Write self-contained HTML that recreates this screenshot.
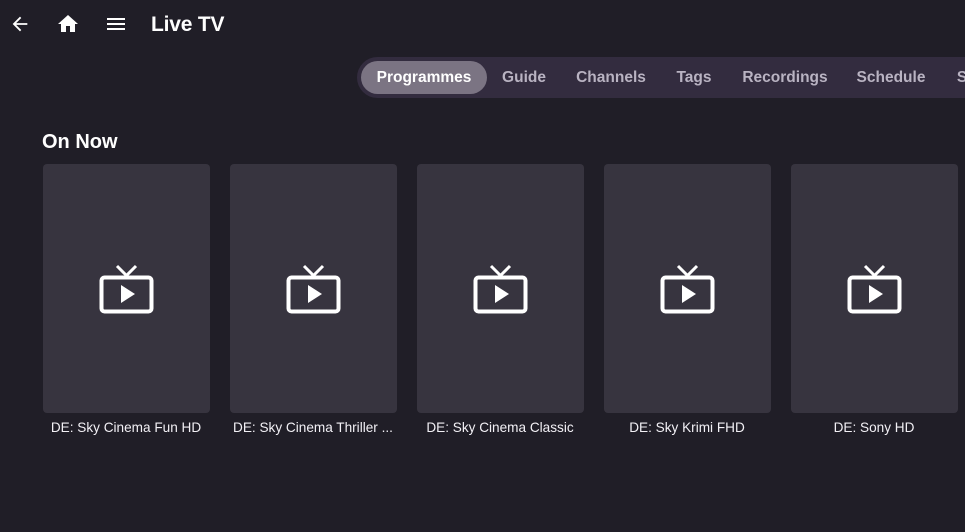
<!DOCTYPE html>
<html><head><style>
*{margin:0;padding:0;box-sizing:border-box}
body{width:965px;height:532px;overflow:hidden;background:#201e27;font-family:"Liberation Sans",Roboto,sans-serif;color:#fff;position:relative}
.abs{position:absolute}
.title{left:151px;top:13px;font-size:21px;font-weight:bold;letter-spacing:-0.2px}
.bar{left:357px;top:57px;width:640px;height:41px;background:#332c3f;border-radius:21px}
.pill{left:361px;top:61px;width:126px;height:33px;background:#7b7483;border-radius:17px}
.tab{top:69px;font-size:15.5px;font-weight:bold;color:#b9b3c2;transform:translateX(-50%);white-space:nowrap}
.h{left:42px;top:131px;font-size:20px;font-weight:bold}
.card{top:164px;width:167px;height:249px;background:#37343f;border-radius:4px}
.lbl{top:420px;font-size:13.6px;color:#f2f0f5;transform:translateX(-50%);white-space:nowrap}
.card svg{position:absolute;left:56px;top:100px}
</style></head><body>
<svg class="abs" style="left:9px;top:13px" width="22" height="22" viewBox="0 0 24 24"><path d="M20 11H7.8l5.6-5.6L12 4l-8 8 8 8 1.4-1.4L7.8 13H20z" fill="#fff"/></svg>
<svg class="abs" style="left:56px;top:12px" width="24" height="24" viewBox="0 0 24 24"><path d="M10 20v-6h4v6h5v-8h3L12 3 2 12h3v8z" fill="#fff"/></svg>
<svg class="abs" style="left:104px;top:12px" width="24" height="24" viewBox="0 0 24 24"><path d="M3 18h18v-2H3zm0-5h18v-2H3zm0-7v2h18V6z" fill="#fff"/></svg>
<div class="abs title">Live TV</div>
<div class="abs bar"></div>
<div class="abs pill"></div>
<div class="abs tab" style="left:424px;color:#fff">Programmes</div>
<div class="abs tab" style="left:524px">Guide</div>
<div class="abs tab" style="left:611px">Channels</div>
<div class="abs tab" style="left:694px">Tags</div>
<div class="abs tab" style="left:785px">Recordings</div>
<div class="abs tab" style="left:891px">Schedule</div>
<div class="abs tab" style="left:962px">S</div>
<div class="abs h">On Now</div>

<div class="abs card" style="left:43px"><svg width="56" height="52" viewBox="0 0 56 52"><rect x="2.5" y="13.5" width="50" height="34" rx="3" fill="none" stroke="#fff" stroke-width="4"/><path d="M18 2l9.5 9.5L37 2" fill="none" stroke="#fff" stroke-width="3"/><path d="M22 21v18l14-9z" fill="#fff"/></svg></div>
<div class="abs card" style="left:230px"><svg width="56" height="52" viewBox="0 0 56 52"><rect x="2.5" y="13.5" width="50" height="34" rx="3" fill="none" stroke="#fff" stroke-width="4"/><path d="M18 2l9.5 9.5L37 2" fill="none" stroke="#fff" stroke-width="3"/><path d="M22 21v18l14-9z" fill="#fff"/></svg></div>
<div class="abs card" style="left:417px"><svg width="56" height="52" viewBox="0 0 56 52"><rect x="2.5" y="13.5" width="50" height="34" rx="3" fill="none" stroke="#fff" stroke-width="4"/><path d="M18 2l9.5 9.5L37 2" fill="none" stroke="#fff" stroke-width="3"/><path d="M22 21v18l14-9z" fill="#fff"/></svg></div>
<div class="abs card" style="left:604px"><svg width="56" height="52" viewBox="0 0 56 52"><rect x="2.5" y="13.5" width="50" height="34" rx="3" fill="none" stroke="#fff" stroke-width="4"/><path d="M18 2l9.5 9.5L37 2" fill="none" stroke="#fff" stroke-width="3"/><path d="M22 21v18l14-9z" fill="#fff"/></svg></div>
<div class="abs card" style="left:791px"><svg width="56" height="52" viewBox="0 0 56 52"><rect x="2.5" y="13.5" width="50" height="34" rx="3" fill="none" stroke="#fff" stroke-width="4"/><path d="M18 2l9.5 9.5L37 2" fill="none" stroke="#fff" stroke-width="3"/><path d="M22 21v18l14-9z" fill="#fff"/></svg></div>

<div class="abs lbl" style="left:126px">DE: Sky Cinema Fun HD</div>
<div class="abs lbl" style="left:313px">DE: Sky Cinema Thriller ...</div>
<div class="abs lbl" style="left:500px">DE: Sky Cinema Classic</div>
<div class="abs lbl" style="left:687px">DE: Sky Krimi FHD</div>
<div class="abs lbl" style="left:874px">DE: Sony HD</div>
</body></html>
